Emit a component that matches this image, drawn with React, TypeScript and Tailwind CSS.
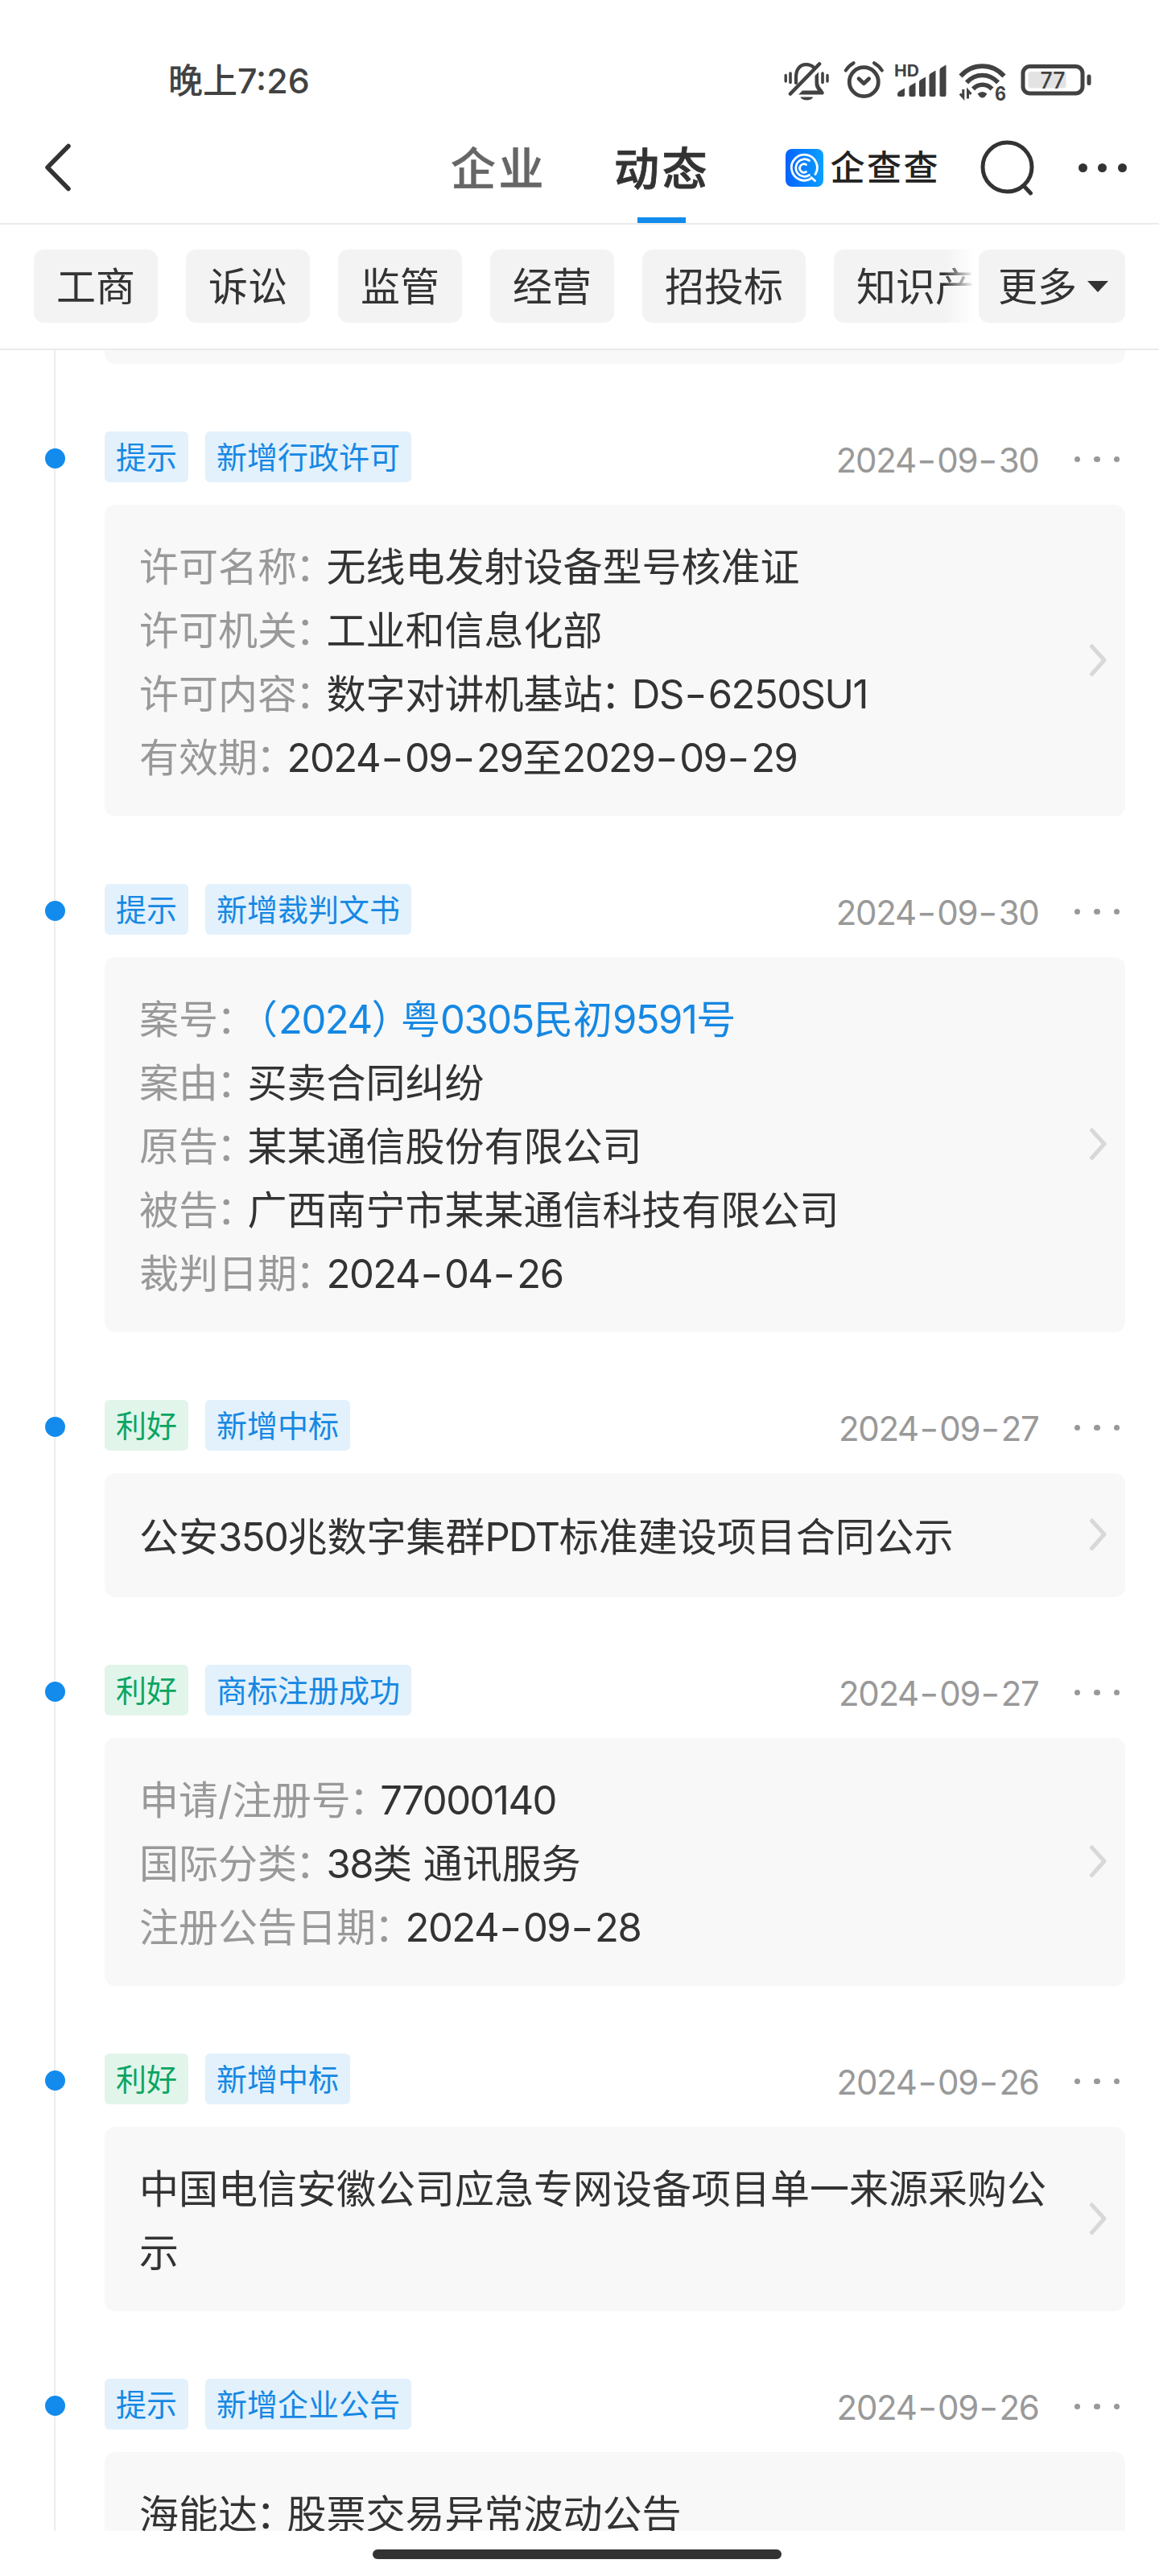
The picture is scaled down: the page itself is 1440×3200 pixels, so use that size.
import React from "react";

type Row = { label: string; value: string; link?: boolean };
type Item = {
  kind: "提示" | "利好";
  tag: string;
  date: string;
  rows?: Row[];
  title?: string;
  tall?: boolean;
};

const items: Item[] = [
  {
    kind: "提示",
    tag: "新增行政许可",
    date: "2024-09-30",
    rows: [
      { label: "许可名称：", value: "无线电发射设备型号核准证" },
      { label: "许可机关：", value: "工业和信息化部" },
      { label: "许可内容：", value: "数字对讲机基站：DS-6250SU1" },
      { label: "有效期：", value: "2024-09-29至2029-09-29" },
    ],
  },
  {
    kind: "提示",
    tag: "新增裁判文书",
    date: "2024-09-30",
    rows: [
      { label: "案号：", value: "（2024）粤0305民初9591号", link: true },
      { label: "案由：", value: "买卖合同纠纷" },
      { label: "原告：", value: "某某通信股份有限公司" },
      { label: "被告：", value: "广西南宁市某某通信科技有限公司" },
      { label: "裁判日期：", value: "2024-04-26" },
    ],
  },
  {
    kind: "利好",
    tag: "新增中标",
    date: "2024-09-27",
    title: "公安350兆数字集群PDT标准建设项目合同公示",
  },
  {
    kind: "利好",
    tag: "商标注册成功",
    date: "2024-09-27",
    rows: [
      { label: "申请/注册号：", value: "77000140" },
      { label: "国际分类：", value: "38类 通讯服务" },
      { label: "注册公告日期：", value: "2024-09-28" },
    ],
  },
  {
    kind: "利好",
    tag: "新增中标",
    date: "2024-09-26",
    title: "中国电信安徽公司应急专网设备项目单一来源采购公示",
  },
  {
    kind: "提示",
    tag: "新增企业公告",
    date: "2024-09-26",
    title: "海能达：股票交易异常波动公告",
    tall: true,
  },
];

/* Sets compact punctuation and tighter latin figures inside Chinese text. */
function Mixed({ text }: { text: string }) {
  const parts = text.split(/([：（）-]|[A-Za-z0-9]+)/).filter(Boolean);
  return (
    <>
      {parts.map((p, i) => {
        if (p === "：")
          return (
            <span key={i} className="mr-[14px] -ml-[2px] inline-block [font-feature-settings:'halt']">
              {p}
            </span>
          );
        if (p === "（")
          return (
            <span key={i} className="mr-[1px] ml-[13px] inline-block [font-feature-settings:'halt']">
              {p}
            </span>
          );
        if (p === "）")
          return (
            <span key={i} className="mr-[12px] inline-block [font-feature-settings:'halt']">
              {p}
            </span>
          );
        if (p === "-")
          return (
            <span key={i} className="inline-block w-[0.63em] scale-x-125 text-center">
              {p}
            </span>
          );
        if (/^[A-Za-z0-9]+$/.test(p))
          return (
            <span key={i} className="tracking-[-0.031em]">
              {p}
            </span>
          );
        return <span key={i}>{p}</span>;
      })}
    </>
  );
}

function StatusBar() {
  return (
    <div className="flex h-[139px] items-start pt-[74px] pl-[209px] text-[#424242]">
      <div className="w-[761px] text-[43px] leading-[53px] font-medium">晚上7:26</div>
      <svg width="64" height="54" viewBox="0 0 64 54" fill="none" stroke="#424242" strokeLinecap="round" strokeLinejoin="round">
        <path d="M6.2 19.5v7.5M58 19.5v7.5" strokeWidth="3.4" />
        <path d="M12 17v11.5M52 17v11.5" strokeWidth="3.6" />
        <path d="M19 29v-7c0-10 5-15.800 12.500-15.800 4 0 7.200 1.300 9.800 3.900" strokeWidth="4.200" />
        <path d="M12 42.500L48 5.500" strokeWidth="4.600" />
        <path d="M22 43.600l5-5h19c-2-2.500-3.500-5-3.500-9v-9.600l4.500-4.500v12c0 4.500 2 7 5 10.500l2 3.600-1.500 2z" fill="#424242" stroke="none" />
        <path d="M24.500 46.500h15.500c-1.500 5.200-13.500 5.200-15.500 0z" fill="#424242" stroke="none" />
      </svg>
      <svg className="ml-[13px]" width="54" height="54" viewBox="0 0 54 54" fill="none" stroke="#424242" strokeLinecap="round" strokeLinejoin="round">
        <circle cx="26.300" cy="27.700" r="18" strokeWidth="4.800" />
        <path d="M20 23.700l6.300 6.100 6.300-6.100" strokeWidth="4.800" />
        <path d="M3.800 13.500c2.500-4 5.700-7 9.700-9.200M48.800 13.500c-2.500-4-5.700-7-9.700-9.200" strokeWidth="4.200" />
      </svg>
      <svg className="ml-[10px]" width="66" height="54" viewBox="0 0 66 54" fill="#424242">
        <text x="0" y="20.500" fontSize="20" fontWeight="700" fontFamily="Inter" textLength="31" lengthAdjust="spacingAndGlyphs">HD</text>
        <path d="M4 43q0-2.500 2-3.500l7-4v8.500q0 2-2 2h-5q-2 0-2-2zM18.500 35q0-2 2-3l6-3.500v15.500q0 2-2 2h-4q-2 0-2-2zM31 28q0-2 2-3l6-3.500v22.500q0 2-2 2h-4q-2 0-2-2zM43.500 20q0-2 2-3l6-3.500v30.500q0 2-2 2h-4q-2 0-2-2zM56.500 13q0-2 2-3l6-3.500v37.500q0 2-2 2h-4q-2 0-2-2z" />
      </svg>
      <svg className="ml-[13px] overflow-visible" width="64" height="60" viewBox="0 0 64 60" fill="none" stroke="#424242">
        <path d="M3.500 20.500c15-16.500 39-16.500 54 0" strokeWidth="5.600" />
        <path d="M11 28.500c11-12 28-12 39 0" strokeWidth="5.600" />
        <path d="M19 36.500c6.500-7 17-7 23.500 0" strokeWidth="5.600" />
        <path d="M24.500 42.500q6-5 12 0l-3 4q-3 2-6 0z" fill="#424242" stroke="none" />
        <path d="M6.800 37v10l-4-4.500M12.500 48.500v-10l4 4.500" strokeWidth="3" />
        <text x="46" y="50.800" fontSize="24" fontWeight="700" fontFamily="Inter" fill="#424242" stroke="none" textLength="14" lengthAdjust="spacingAndGlyphs">6</text>
      </svg>
      <svg className="ml-[12px]" width="92" height="54" viewBox="0 0 92 54" fill="none">
        <rect x="5" y="8.500" width="74" height="33.500" rx="8.500" stroke="#424242" strokeWidth="5" />
        <rect x="11.500" y="15" width="47" height="20.500" rx="3" fill="#e3e3e3" />
        <rect x="84.500" y="18.500" width="5" height="13.500" rx="2.500" fill="#424242" />
        <text x="26.500" y="36" fontSize="28" fontWeight="500" fontFamily="Inter" fill="#424242" textLength="31" lengthAdjust="spacingAndGlyphs">77</text>
      </svg>
    </div>
  );
}

function NavBar() {
  return (
    <div className="flex h-[140px] items-stretch border-b-2 border-[#ebebeb] text-[#333]">
      <svg className="ml-[51px] self-center" width="40" height="64" viewBox="0 0 40 64" fill="none" stroke="#333" strokeWidth="5.500" strokeLinecap="round" strokeLinejoin="round">
        <path d="M34 5.500L8 32l26 26.500" />
      </svg>
      <div className="ml-[468px] flex w-[120px] items-center pt-[4px] pl-px text-[56px] leading-none font-medium tracking-[3.5px] text-[#666] [-webkit-text-stroke:0.5px_#666]">
        企业
      </div>
      <div className="ml-[83px] flex w-[120px] flex-col items-center">
        <div className="flex flex-1 items-center pt-[4px] pl-px text-[56px] leading-none font-medium tracking-[3.5px] whitespace-nowrap [-webkit-text-stroke:0.8px_#333]">
          动态
        </div>
        <div className="-mt-[7px] h-[7px] w-[60px] bg-[#128bed]" />
      </div>
      <div className="ml-[94px] flex items-center">
        <svg width="47" height="47" viewBox="0 0 47 47" fill="none" stroke="#fff" strokeWidth="2.800" strokeLinecap="round">
          <defs>
            <linearGradient id="brand" x1="0" y1="0" x2="1" y2="0">
              <stop offset="0" stopColor="#0663ff" />
              <stop offset="1" stopColor="#0aa0ff" />
            </linearGradient>
          </defs>
          <rect width="47" height="47" rx="8" fill="url(#brand)" stroke="none" />
          <path d="M32 36.600A16 16 0 1 1 37 31.500M32 35.500l4.500 4" />
          <path d="M29.500 32.500A10.800 10.800 0 1 1 29.500 14.500" />
          <path d="M25.500 28.500A5.200 5.200 0 1 1 25.500 19.500" />
        </svg>
        <span className="ml-[8.500px] w-[139px] text-[43px] leading-none font-medium tracking-[2.500px] text-[#222]">企查查</span>
      </div>
      <svg className="ml-[46px] self-center" width="72" height="72" viewBox="0 0 72 72" fill="none" stroke="#333" strokeWidth="5" strokeLinecap="round">
        <circle cx="34.500" cy="35.500" r="30.500" />
        <path d="M56 60l7.500 8" />
      </svg>
      <div className="ml-[51px] flex items-center gap-[13.500px]">
        <i className="size-[11px] rounded-full bg-[#333]" />
        <i className="size-[11px] rounded-full bg-[#333]" />
        <i className="size-[11px] rounded-full bg-[#333]" />
      </div>
    </div>
  );
}

function FilterBar() {
  return (
    <div className="flex h-[156px] items-start border-b-2 border-[#ebebeb] pt-[31px] pl-[42px] text-[49px] leading-[93px] text-[#333]">
      <div className="relative flex w-[1174px] shrink-0 gap-[35px] overflow-hidden whitespace-nowrap">
        {["工商", "诉讼", "监管", "经营", "招投标", "知识产权"].map((t) => (
          <div key={t} className="h-[91px] shrink-0 rounded-[13px] bg-[#f3f3f3] px-7">
            {t}
          </div>
        ))}
        <div className="absolute top-0 right-0 h-[91px] w-[43px] bg-linear-to-r from-white/0 to-white to-[88%]" />
      </div>
      <div className="flex h-[91px] w-[182px] items-center rounded-[13px] bg-[#f3f3f3] pl-[24px]">
        <span className="pt-0.5">更多</span>
        <svg className="ml-[13px]" width="26" height="14" viewBox="0 0 26 14">
          <path d="M0 0h26L13 14z" fill="#333" />
        </svg>
      </div>
    </div>
  );
}

function Entry({ item }: { item: Item }) {
  const good = item.kind === "利好";
  return (
    <section>
      <div className="mt-[84px] flex h-[63px] items-center pl-[56px]">
        <i className="relative top-0.5 size-[25px] rounded-full bg-[#128bed]" />
        <div className="ml-[49px] flex gap-[21px] text-[38px] leading-[65px]">
          <span className={good ? "h-[63px] rounded-[6px] bg-[#e1f5eb] px-[14px] text-[#0aa562]" : "h-[63px] rounded-[6px] bg-[#e2f1fc] px-[14px] text-[#1688e3]"}>
            {item.kind}
          </span>
          <span className="h-[63px] rounded-[6px] bg-[#e2f1fc] px-[14px] text-[#1688e3]">{item.tag}</span>
        </div>
        <span className="mr-[44px] ml-auto pt-[9px] text-[42px] leading-[56px] text-[#999]">
          <Mixed text={item.date} />
        </span>
        <div className="mr-[49px] flex gap-[17px] pt-[6px]">
          <i className="size-[7.500px] rounded-full bg-[#999]" />
          <i className="size-[7.500px] rounded-full bg-[#999]" />
          <i className="size-[7.500px] rounded-full bg-[#999]" />
        </div>
      </div>
      <div className="mt-7 mr-[42px] ml-[130px] flex min-h-[154px] items-center rounded-[13px] bg-[#f8f8f8] pr-[23px] pl-[43px] text-[49px] leading-[79px] text-[#333]">
        <div className={item.tall ? "w-[1141px] shrink-0 pt-[38px] pb-[234px]" : "w-[1141px] shrink-0 pt-[38px] pb-[33px]"}>
          {item.rows
            ? item.rows.map((r) => (
                <div key={r.label} className="flex h-[79px] whitespace-nowrap">
                  <div className="text-[#999]">
                    <Mixed text={r.label} />
                  </div>
                  <div className={r.link ? "text-[#1688e3]" : ""}>
                    <Mixed text={r.value} />
                  </div>
                </div>
              ))
            : item.title && <Mixed text={item.title} />}
        </div>
        <svg className="relative -top-px ml-auto" width="22" height="42" viewBox="0 0 22 42" fill="none" stroke="#d8d8d8" strokeWidth="5" strokeLinecap="round" strokeLinejoin="round">
          <path d="M3.500 4l15.500 17L3.500 38.500" />
        </svg>
      </div>
    </section>
  );
}

export default function App() {
  return (
    <div className="flex h-[3200px] w-[1440px] flex-col overflow-hidden bg-white font-[Inter,'Noto_Sans_CJK_SC',sans-serif]">
      <StatusBar />
      <NavBar />
      <FilterBar />
      <main className="relative h-[2709px] shrink-0 overflow-hidden">
        <div className="absolute top-0 left-[67px] h-full w-0.5 bg-[#ececec]" />
        <div className="relative">
          <div className="mr-[42px] ml-[130px] h-[17px] rounded-b-[13px] bg-[#f8f8f8]" />
          {items.map((it, i) => (
            <Entry key={i} item={it} />
          ))}
        </div>
      </main>
      <div className="mt-[23px] ml-[463px] h-[12px] w-[508px] shrink-0 rounded-full bg-[#333]" />
    </div>
  );
}
